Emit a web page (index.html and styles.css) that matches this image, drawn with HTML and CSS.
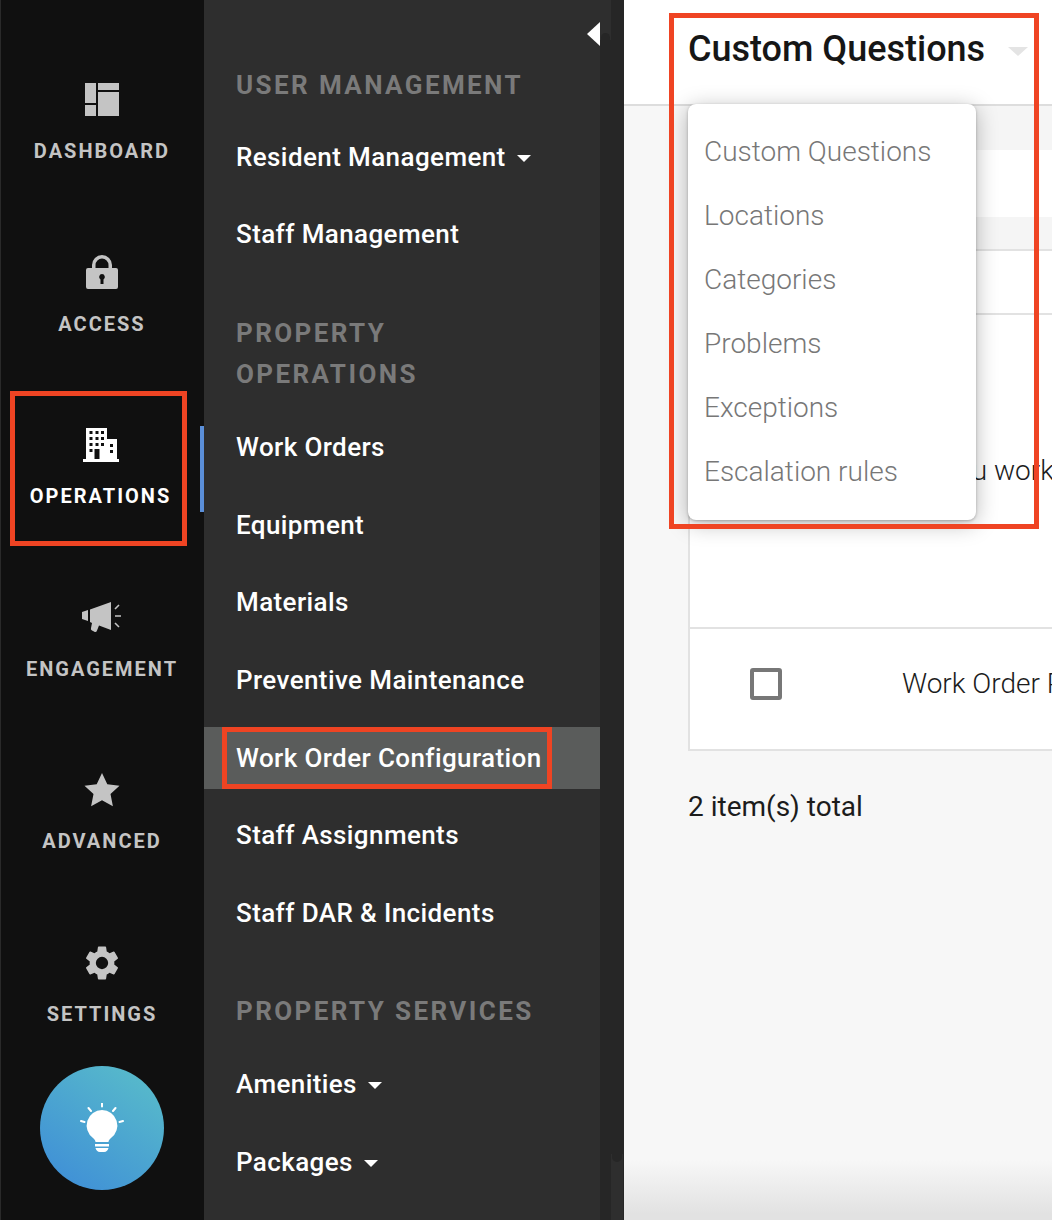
FILE: index.html
```html
<!DOCTYPE html>
<html lang="en">
<head>
<meta charset="utf-8">
<title>Work Order Configuration</title>
<link rel="stylesheet" href="styles.css">
</head>
<body>
<div class="app">
  <nav class="rail">
    <a class="rail-item">
      <svg class="rail-icon" viewBox="0 0 36 36"><path d="M1 1h11v20H1zM1 23h11v11H1zM14 1h21v7H14zM14 10h21v24H14z"/></svg>
      <span>DASHBOARD</span>
    </a>
    <a class="rail-item">
      <svg class="rail-icon" viewBox="0 0 36 36"><path fill-rule="evenodd" d="M8 13V10a10 10 0 0 1 20 0v3h4a2 2 0 0 1 2 2v17a2 2 0 0 1-2 2H4a2 2 0 0 1-2-2V15a2 2 0 0 1 2-2zM11.500 13h13V10a6.500 6.500 0 0 0-13 0zM18 19a3 3 0 0 0-1.500 5.500V29h3v-4.500A3 3 0 0 0 18 19z"/></svg>
      <span>ACCESS</span>
    </a>
    <a class="rail-item rail-item-active">
      <svg class="rail-icon" viewBox="0 0 36 36"><path fill-rule="evenodd" d="M3 1h21v11h10v20h2v3H0v-3h3zM6.500 4v3h3V4zM12.500 4v3h3V4zM18 4v3h3V4zM6.500 10v3h3v-3zM12.500 10v3h3v-3zM18 10v3h3v-3zM6.500 16v3h3v-3zM12.500 16v3h3v-3zM18 16v3h3v-3zM6.500 22v3h3v-3zM11.500 22v10h5V22zM27 17v3h3v-3zM27 23v3h3v-3z"/></svg>
      <span>OPERATIONS</span>
    </a>
    <a class="rail-item">
      <svg class="rail-icon rail-icon-wide" viewBox="0 0 40 36"><path d="M0 12l6-2v11l-6-2zM8 9.500L29 2v28L17 25.500 15 30.500a2 2 0 0 1-3 1l-2-1a2 2 0 0 1-1-2.500l1-5-2-1z"/><path class="rail-icon-ray" d="M33 9l4-4M33 16h6M33 23l4 4"/></svg>
      <span>ENGAGEMENT</span>
    </a>
    <a class="rail-item">
      <svg class="rail-icon" viewBox="0 0 36 36"><path d="M18 1l5.300 11.200 12.200 1.500-9 8.400 2.400 12.100L18 28.200 7.100 34.200l2.400-12.100-9-8.400 12.200-1.500z"/></svg>
      <span>ADVANCED</span>
    </a>
    <a class="rail-item">
      <svg class="rail-icon" viewBox="1.500 1.500 21 21"><path d="M19.140 12.940c.04-.3.060-.61.060-.94 0-.32-.020-.64-.070-.94l2.030-1.580a.49.49 0 0 0 .12-.61l-1.920-3.320a.49.49 0 0 0-.59-.22l-2.390.96a7 7 0 0 0-1.620-.94l-.36-2.540a.48.48 0 0 0-.48-.41h-3.840a.47.47 0 0 0-.47.41l-.36 2.540a7.200 7.200 0 0 0-1.620.94l-2.390-.96a.48.48 0 0 0-.59.22L2.740 8.870a.47.47 0 0 0 .12.61l2.030 1.580c-.05.3-.09.63-.09.94s.020.64.070.94l-2.030 1.580a.49.49 0 0 0-.12.61l1.920 3.320c.12.22.37.29.59.22l2.390-.96c.5.38 1.030.7 1.620.94l.36 2.540c.05.24.24.41.48.41h3.840c.24 0 .44-.17.47-.41l.36-2.540a6.900 6.900 0 0 0 1.620-.94l2.390.96c.22.08.47 0 .59-.22l1.920-3.320a.46.46 0 0 0-.12-.61zM12 15.600a3.600 3.600 0 1 1 0-7.200 3.600 3.600 0 0 1 0 7.200z"/></svg>
      <span>SETTINGS</span>
    </a>
    <div class="tip-button">
      <svg class="tip-icon" viewBox="0 0 44 50"><path d="M22 7a15.500 15.500 0 0 0-9 28c1.500 1.200 2.500 2.500 2.500 4h13c0-1.500 1-2.800 2.500-4a15.500 15.500 0 0 0-9-28zM15 41h14v2.500H15zM15.500 45h13c-.5 2-2 4-4.500 4h-4c-2.500 0-4-2-4.500-4z"/><path class="tip-ray" d="M22 0v3.500M8.500 5l2.500 3M35.500 5L33 8M1 18l3.500 1M43 18l-3.500 1"/></svg>
    </div>
  </nav>

  <aside class="subnav">
    <h2 class="subnav-heading subnav-heading-first">USER MANAGEMENT</h2>
    <a class="subnav-item">Resident Management <i class="caret"></i></a>
    <a class="subnav-item">Staff Management</a>
    <h2 class="subnav-heading subnav-heading-ops">PROPERTY<br>OPERATIONS</h2>
    <a class="subnav-item">Work Orders</a>
    <a class="subnav-item">Equipment</a>
    <a class="subnav-item">Materials</a>
    <a class="subnav-item">Preventive Maintenance</a>
    <a class="subnav-item subnav-item-active">Work Order Configuration</a>
    <a class="subnav-item">Staff Assignments</a>
    <a class="subnav-item">Staff DAR &amp; Incidents</a>
    <h2 class="subnav-heading subnav-heading-gap">PROPERTY SERVICES</h2>
    <a class="subnav-item">Amenities <i class="caret"></i></a>
    <a class="subnav-item">Packages <i class="caret"></i></a>
  </aside>

  <div class="gutter">
    <div class="track track-top"><i class="thumb-end thumb-end-top"></i></div>
    <div class="track track-bottom"><i class="thumb-end thumb-end-bottom"></i></div>
    <i class="collapse"></i>
  </div>

  <main class="main">
    <header class="topbar">
      <h1 class="title">Custom Questions</h1>
      <i class="title-caret"></i>
    </header>
    <div class="content">
      <div class="band"></div>
      <div class="card">
        <div class="card-search"></div>
        <div class="card-head"></div>
        <div class="card-row-short"></div>
        <div class="card-row card-row-tall"><span class="check"></span><span class="cell">Do you work on this?</span></div>
        <div class="card-row"><span class="check check-show"></span><span class="cell">Work Order Priority</span></div>
      </div>
      <p class="total">2 item(s) total</p>
    </div>
    <ul class="menu">
      <li>Custom Questions</li>
      <li>Locations</li>
      <li>Categories</li>
      <li>Problems</li>
      <li>Exceptions</li>
      <li>Escalation rules</li>
    </ul>
  </main>
</div>
<div class="mark mark-rail"></div>
<div class="mark mark-item"></div>
<div class="mark mark-menu"></div>
<div class="active-bar"></div>
</body>
</html>
```
FILE: styles.css
```css
* { box-sizing: border-box; }
html, body { margin: 0; height: 100%; overflow: hidden; }
body { font-family: Roboto, "Liberation Sans", sans-serif; position: relative; }
.app { display: flex; height: 1220px; }

.rail { width: 204px; flex: none; background: #101010; border-left: 1px solid #2a2a2a; padding: 82px 1px 0 0; position: relative; display: flex; flex-direction: column; }
.rail-item { height: 172.500px; flex: none; display: flex; flex-direction: column; align-items: center; color: #c4c4c4; font-size: 20px; font-weight: 700; letter-spacing: 2px; line-height: 24px; }
.rail-item span { margin-top: 21px; }
.rail-icon { width: 36px; height: 36px; fill: currentColor; flex: none; }
.rail-icon-wide { width: 40px; }
.rail-icon-ray { stroke: currentColor; stroke-width: 1.600; fill: none; }
.rail-item-active { color: #fff; padding-right: 3px; }
.tip-button { position: absolute; left: 39px; top: 1066px; width: 124px; height: 124px; border-radius: 50%; background: linear-gradient(215deg, #5abfc9 0%, #3d8bd8 100%); display: flex; align-items: center; justify-content: center; }
.tip-icon { width: 44px; height: 50px; fill: #fff; }
.tip-ray { stroke: #fff; stroke-width: 2; fill: none; stroke-linecap: round; }

.subnav { width: 396px; flex: none; background: #2e2e2e; padding-top: 65px; display: flex; flex-direction: column; }
.subnav-heading { margin: 0; padding-left: 32px; font-size: 26px; line-height: 41px; font-weight: 700; letter-spacing: 2.400px; color: #7a7a7a; }
.subnav-heading-first { margin-bottom: -1px; }
.subnav-heading-ops { margin-top: 48.330px; }
.subnav-heading-gap { margin-top: 47.500px; }
.subnav-item { height: 62px; margin-top: 15.670px; flex: none; display: flex; align-items: center; padding-left: 32px; font-size: 26px; font-weight: 500; letter-spacing: .4px; color: #fff; }
.subnav-heading + .subnav-item { margin-top: 20.500px; }
.subnav-item-active { background: #5a5c5b; }
.caret { width: 0; height: 0; margin-left: 11px; margin-top: 3px; border-left: 7px solid transparent; border-right: 7px solid transparent; border-top: 7px solid #fff; }

.gutter { width: 24px; flex: none; background: #262626; position: relative; }
.track { position: absolute; background: #2e2e2e; }
.track-top { left: 0; top: 0; width: 11px; height: 40px; }
.track-bottom { left: 11px; top: 1154px; bottom: 0; width: 12px; }
.thumb-end { position: absolute; left: 1px; right: 1px; height: 8px; background: #262626; }
.thumb-end-top { bottom: 0; height: 7px; border-radius: 5px 5px 0 0; }
.thumb-end-bottom { top: 0; border-radius: 0 0 5px 5px; }
.collapse { position: absolute; left: -13px; top: 22px; width: 0; height: 0; border-top: 12px solid transparent; border-bottom: 12px solid transparent; border-right: 13px solid #fff; }

.main { flex: 1; min-width: 0; position: relative; background: linear-gradient(#f7f7f7 calc(100% - 60px), #e2e2e2 calc(100% - 6px)); overflow: hidden; }
.topbar { height: 106px; background: #fff; border-bottom: 2px solid #ddd; padding: 26px 0 0 64px; display: flex; align-items: flex-start; }
.title { margin: 0; font-size: 36px; line-height: 46px; font-weight: 500; color: #161616; white-space: nowrap; }
.title-caret { margin: 21px 0 0 23px; width: 0; height: 0; border-left: 10px solid transparent; border-right: 10px solid transparent; border-top: 9px solid #e4e4e4; }
.content { padding-left: 64px; }
.band { height: 44px; background: #f5f5f5; }
.card { background: #fff; border-left: 2px solid #e2e2e2; border-bottom: 2px solid #e2e2e2; width: 500px; }
.card-search { height: 67px; }
.card-head { height: 34px; background: #f5f5f5; border-bottom: 2px solid #e2e2e2; }
.card-row-short { height: 64px; border-bottom: 2px solid #e2e2e2; }
.card-row { height: 120px; padding-bottom: 11px; display: flex; align-items: center; }
.card-row-tall { height: 314px; padding-bottom: 2px; border-bottom: 2px solid #e2e2e2; }
.check { width: 32px; height: 32px; margin-left: 60px; flex: none; }
.check-show { border: 4px solid #777; border-radius: 3px; }
.cell { margin-left: 120px; font-size: 28px; font-weight: 300; color: #1c1c1c; white-space: nowrap; }
.total { margin: 38px 0 0; font-size: 28px; line-height: 36px; color: #1c1c1c; }

.menu { position: absolute; left: 64px; top: 104px; width: 288px; height: 416px; margin: 0; padding: 16px 0 0; list-style: none; background: #fff; border-radius: 8px; box-shadow: 0 1px 3px rgba(0, 0, 0, .25), 0 4px 22px rgba(0, 0, 0, .28); }
.menu li { height: 64px; padding-left: 16px; font-size: 28px; font-weight: 300; line-height: 64px; color: #777; }

.mark { position: absolute; border: 5px solid #ef4423; pointer-events: none; }
.mark-rail { left: 10px; top: 391px; width: 177px; height: 155px; }
.mark-item { left: 222px; top: 727px; width: 330px; height: 62px; }
.mark-menu { left: 669px; top: 13px; width: 370px; height: 516px; }
.active-bar { position: absolute; left: 200px; top: 426px; width: 4px; height: 86px; background: #5b8fd9; }
```
